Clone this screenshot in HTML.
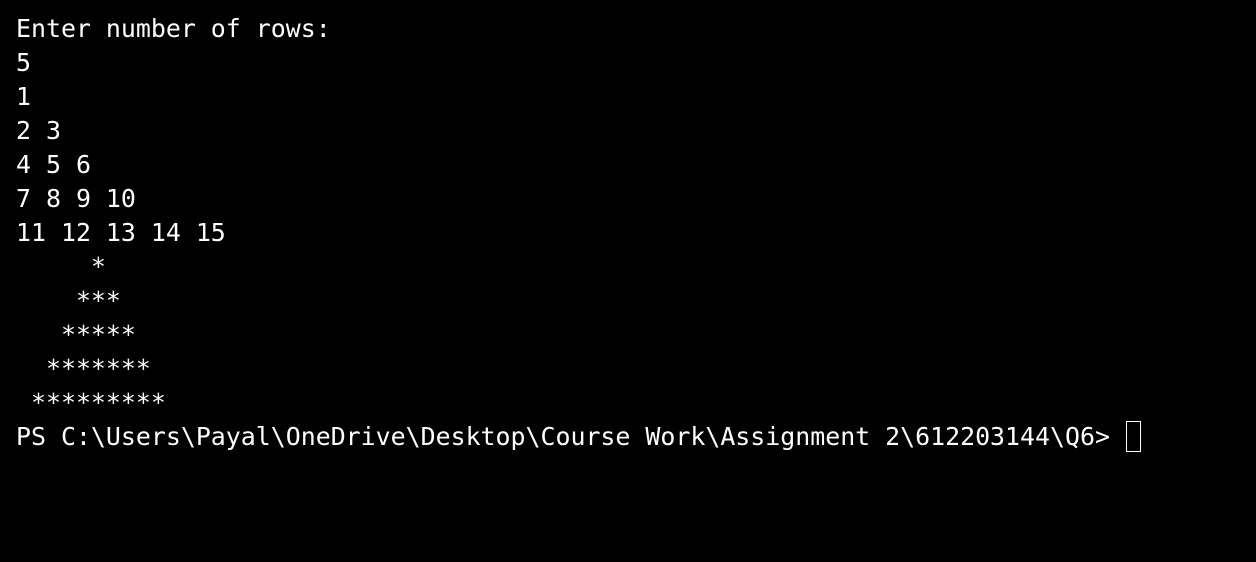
<!DOCTYPE html>
<html><head><meta charset="utf-8"><style>
html,body{margin:0;padding:0;background:#000;width:1256px;height:562px;overflow:hidden}
pre{margin:0;padding:12px 0 0 16px;color:#fff;font-family:"DejaVu Sans Mono","Liberation Mono",monospace;font-size:24.9px;line-height:34px;white-space:pre}
.cur{display:inline-block;width:13px;height:29px;border:1.5px solid #fff;vertical-align:-7px;margin-left:1px}
</style></head><body><pre>Enter number of rows:
5
1
2 3
4 5 6
7 8 9 10
11 12 13 14 15
     *
    ***
   *****
  *******
 *********
PS C:\Users\Payal\OneDrive\Desktop\Course Work\Assignment 2\612203144\Q6> <span class="cur"></span></pre></body></html>
